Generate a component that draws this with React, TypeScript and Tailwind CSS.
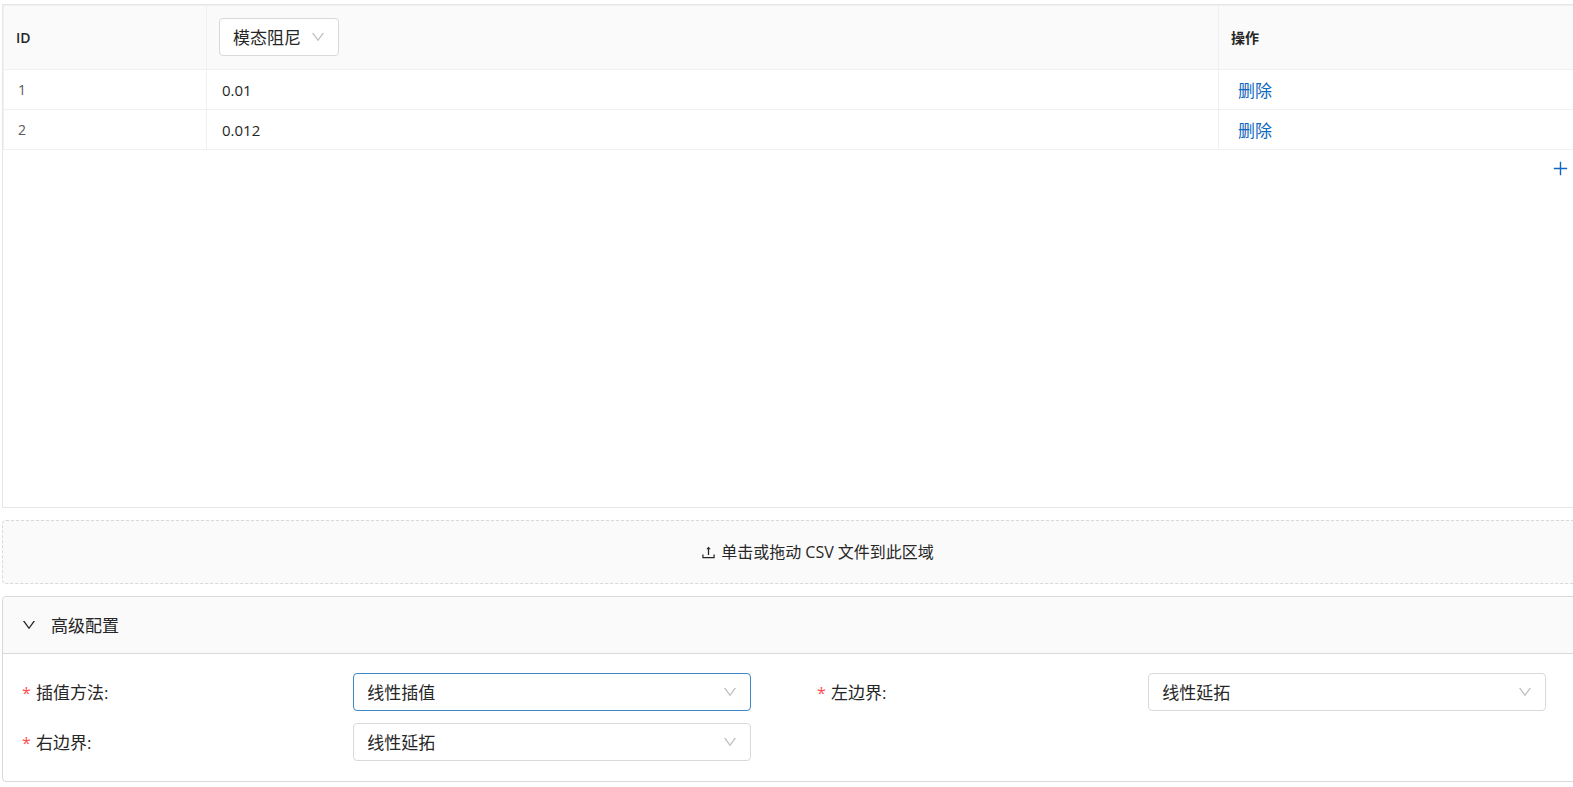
import { useState } from "react";
import clsx from "clsx";
import { AiOutlineDown, AiOutlinePlus, AiOutlineUpload } from "react-icons/ai";

type Row = { id: number; value: string };

const METHODS = ["线性插值", "对数插值"];
const BOUNDARIES = ["线性延拓", "常值延拓"];

function Select({
  id,
  label,
  options,
  active,
  className,
}: {
  id: string;
  label?: string;
  options: string[];
  active?: boolean;
  className?: string;
}) {
  return (
    <div className={clsx("relative", className)}>
      <select
        id={id}
        aria-label={label}
        className={clsx(
          "block h-[38px] w-full cursor-pointer appearance-none rounded border bg-white pt-[2px] pr-9 pl-[13px] text-[17px] leading-6 outline-none",
          active ? "border-[#3b88c8]" : "border-[#d9d9d9]",
        )}
      >
        {options.map((option) => (
          <option key={option}>{option}</option>
        ))}
      </select>
      <AiOutlineDown className="pointer-events-none absolute top-[11px] right-[13px] h-4 w-4 text-[#bfbfbf]" />
    </div>
  );
}

function Field({ id, label, options, active }: { id: string; label: string; options: string[]; active?: boolean }) {
  return (
    <div className="grid grid-cols-12 items-center">
      <label htmlFor={id} className="col-span-5 flex items-center pt-[2px] text-[17px] leading-6">
        <span className="mr-1 w-[10px] text-base text-[#ff4d4f]">*</span>
        {label}:
      </label>
      <Select id={id} options={options} active={active} className="col-span-6" />
    </div>
  );
}

export default function App() {
  const [rows, setRows] = useState<Row[]>([
    { id: 1, value: "0.01" },
    { id: 2, value: "0.012" },
  ]);
  const [open, setOpen] = useState(true);

  const addRow = () => setRows((r) => [...r, { id: (r[r.length - 1]?.id ?? 0) + 1, value: "0" }]);

  return (
    <div className="overflow-hidden bg-white pt-1 pb-[5px] pl-[2px] font-['Open_Sans','Noto_Sans_CJK_SC',sans-serif] text-[#262626]">
      {/* content is wider than the viewport, the right edge is cut off */}
      <div className="-mr-[59px] flex flex-col gap-3">
        <div className="h-[504px] border border-[#e4e6ea]">
          <table className="w-full table-fixed border-separate border-spacing-0 border-t border-l border-[#f0f0f0] text-left">
            <thead className="bg-[#fafafa] text-sm">
              <tr className="h-16">
                <th className="w-[203px] border-r border-b border-[#f0f0f0] pl-3 font-semibold">ID</th>
                <th className="border-r border-b border-[#f0f0f0] pb-[2px] pl-3 font-normal">
                  <Select id="kind" label="阻尼类型" options={["模态阻尼", "结构阻尼"]} className="w-[120px]" />
                </th>
                <th className="w-[412px] border-b border-[#f0f0f0] pl-3 font-semibold">操作</th>
              </tr>
            </thead>
            <tbody>
              {rows.map((row) => (
                <tr key={row.id} className="h-10">
                  <td className="border-r border-b border-[#f0f0f0] pl-[14px] text-sm text-[#595959]">{row.id}</td>
                  <td className="border-r border-b border-[#f0f0f0] pt-[2px] pl-[15px] text-[15px]">{row.value}</td>
                  <td className="border-b border-[#f0f0f0] pt-[2px] pl-[19px]">
                    <button
                      type="button"
                      onClick={() => setRows((r) => r.filter((x) => x.id !== row.id))}
                      className="block cursor-pointer text-[17px] leading-6 text-[#1068bf]"
                    >
                      删除
                    </button>
                  </td>
                </tr>
              ))}
            </tbody>
          </table>
          <div className="flex justify-end pt-[9px] pr-[61px]">
            <button type="button" aria-label="添加" onClick={addRow} className="cursor-pointer text-[#1068bf]">
              <AiOutlinePlus className="h-[19px] w-[19px]" />
            </button>
          </div>
        </div>

        <button
          type="button"
          className="flex h-16 cursor-pointer items-center justify-center gap-1 rounded border border-dashed border-[#d9d9d9] bg-[#fafafa] text-base"
        >
          <AiOutlineUpload className="h-[17px] w-[17px]" />
          单击或拖动 CSV 文件到此区域
        </button>

        <section className="rounded border border-[#d9d9d9]">
          <button
            type="button"
            aria-expanded={open}
            onClick={() => setOpen(!open)}
            className="flex h-14 w-full cursor-pointer items-center rounded-t bg-[#fafafa] pl-[18px] text-[17px]"
          >
            <AiOutlineDown className={clsx("mr-[14px] h-4 w-4", !open && "-rotate-90")} />
            <span className="pt-[2px]">高级配置</span>
          </button>
          {open && (
            <div className="grid grid-cols-2 gap-y-3 border-t border-[#d9d9d9] px-[19px] pt-[19px] pb-5">
              <Field id="method" label="插值方法" options={METHODS} active />
              <Field id="left" label="左边界" options={BOUNDARIES} />
              <Field id="right" label="右边界" options={BOUNDARIES} />
            </div>
          )}
        </section>
      </div>
    </div>
  );
}
